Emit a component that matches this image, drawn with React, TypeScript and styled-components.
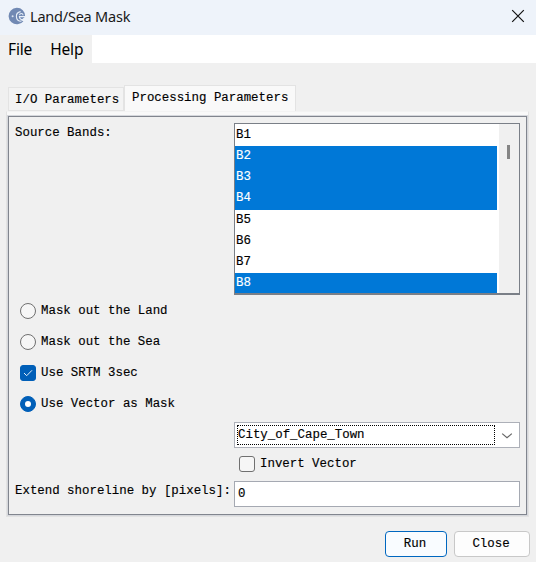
import React from "react";
import styled, { createGlobalStyle } from "styled-components";

const GlobalStyle = createGlobalStyle`
  * { box-sizing: border-box; }
  body { margin: 0; background: #f0f0f0; overflow: hidden; }
`;

const Window = styled.div`
  width: 536px;
  height: 562px;
  background: #f0f0f0;
  color: #000;
  font: 12.42px/20px "Liberation Mono", monospace;
  -webkit-text-stroke: 0.15px currentColor;
  white-space: pre;
  display: flex;
  flex-direction: column;
`;

const TitleBar = styled.header`
  height: 35px;
  flex: none;
  background: #eef3fa;
  display: flex;
  align-items: center;
  padding: 0 11px 4px 8px;
  -webkit-text-stroke: 0;
`;

const Title = styled.span`
  font: 14.5px/22px "Noto Sans", sans-serif;
  letter-spacing: -0.22px;
  color: #191919;
  margin: 1px auto 0 4px;
`;

const MenuBar = styled.nav`
  height: 28px;
  flex: none;
  background: #fff;
  display: flex;
  -webkit-text-stroke: 0;
`;

const Menus = styled.div`
  width: 92px;
  background: #f0f0f0;
  display: flex;
  gap: 18px;
  padding-left: 8px;
  font: 15.5px/28px "Noto Sans", sans-serif;
  letter-spacing: -0.15px;
`;

const TabStrip = styled.div`
  height: 48px;
  flex: none;
  display: flex;
  align-items: flex-end;
  padding-left: 8px;
`;

const Tab = styled.div<{ $active?: boolean }>`
  width: ${(p) => (p.$active ? 172 : 116)}px;
  height: ${(p) => (p.$active ? 26 : 24)}px;
  padding: ${(p) => (p.$active ? "2px 0 0 7px" : "2px 0 0 6px")};
  background: ${(p) => (p.$active ? "#f9f9f9" : "#f3f3f3")};
  border: 1px solid #e3e3e3;
  border-bottom: ${(p) => (p.$active ? "none" : "1px solid #e3e3e3")};
`;

const TabPane = styled.main`
  width: 523px;
  height: 406px;
  flex: none;
  margin-left: 6px;
  background: #f9f9f9;
  border: 1px solid #e2e2e2;
  border-top-color: #f3f3f3;
  padding: 4px 1px 1px 1px;
`;

const Form = styled.section`
  height: 100%;
  background: #f0f0f0;
  border: 1px solid #81858e;
  box-shadow: 0 0 0 1px #d5d7dc;
  padding: 6px 6px 0;
  display: flex;
  flex-direction: column;
`;

const FieldRow = styled.div<{ $h: number; $gap?: number }>`
  height: ${(p) => p.$h}px;
  margin-top: ${(p) => p.$gap ?? 0}px;
  flex: none;
  display: grid;
  grid-template-columns: 219px 286px;
`;

const FieldLabel = styled.label`
  line-height: 20px;
`;

const BandList = styled.div`
  height: 172px;
  border: 1px solid #7a7f87;
  border-bottom-width: 2px;
  background: #fff;
  display: flex;
  overflow: hidden;
`;

const Bands = styled.div`
  flex: 1;
  padding: 1px 2px 0 0;
`;

const Band = styled.div<{ $selected: boolean }>`
  height: 21.15px;
  line-height: 21px;
  padding-left: 1px;
  background: ${(p) => (p.$selected ? "#0078d7" : "#fff")};
  color: ${(p) => (p.$selected ? "#fff" : "#000")};
`;

const ScrollTrack = styled.div`
  width: 20px;
  background: #f0f0f0;
  padding: 21px 0 0 8px;
`;

const ScrollThumb = styled.div`
  width: 3px;
  height: 14px;
  background: #858585;
`;

const Choice = styled.label<{ $indent?: boolean; $h: number }>`
  height: ${(p) => p.$h}px;
  flex: none;
  display: flex;
  align-items: center;
  gap: 5px;
  padding-left: ${(p) => (p.$indent ? 224 : 5)}px;
`;

const Mark = styled.span<{ $round?: boolean; $on?: boolean }>`
  width: 16px;
  height: 16px;
  border-radius: ${(p) => (p.$round ? "50%" : "3px")};
  border: 1px solid ${(p) => (p.$on ? "#005fb8" : "#707070")};
  background: ${(p) => (p.$on ? "#005fb8" : "#f6f6f6")};
  display: flex;
  align-items: center;
  justify-content: center;
`;

const Dot = styled.span`
  width: 6px;
  height: 6px;
  border-radius: 50%;
  background: #fff;
`;

const Combo = styled.div`
  height: 26px;
  border: 1px solid #adb0b8;
  background: #fff;
  display: flex;
  align-items: center;
  padding: 0 6px 0 2px;
  justify-content: space-between;
`;

const ComboValue = styled.div`
  width: 258px;
  height: 20px;
  border: 1px dotted #000;
  line-height: 18px;
`;

const TextInput = styled.div`
  height: 26px;
  border: 1px solid #a5a9b2;
  background: #fff;
  padding-left: 3px;
  line-height: 25px;
`;

const Actions = styled.footer`
  flex: 1;
  display: flex;
  justify-content: flex-end;
  gap: 7px;
  padding: 14px 6px 0 0;
`;

const Button = styled.button<{ $primary?: boolean }>`
  width: ${(p) => (p.$primary ? 62 : 76)}px;
  height: 26px;
  border-radius: 4px;
  border: 1px solid ${(p) => (p.$primary ? "#0067c0" : "#c8c8c8")};
  background: ${(p) => (p.$primary ? "#f9fcff" : "#fdfdfd")};
  font: inherit;
  color: inherit;
  padding: 0 2px 0 0;
`;

const bands = [
  { name: "B1", selected: false },
  { name: "B2", selected: true },
  { name: "B3", selected: true },
  { name: "B4", selected: true },
  { name: "B5", selected: false },
  { name: "B6", selected: false },
  { name: "B7", selected: false },
  { name: "B8", selected: true },
];

const AgencyLogo = () => (
  <svg width="18" height="18" viewBox="0 0 18 18">
    <path
      d="M14.8 3.2A8.3 8.3 0 1 0 15.4 14.2L13 13.2 17 9.8A8.3 8.3 0 0 0 14.8 3.2Z"
      fill="#7189b3"
    />
    <circle cx="4.6" cy="9.2" r="1" fill="#dce5f2" />
    <path
      d="M17 9.6h-5.6c0 2.6 2.2 3.6 4.6 2.6M11.5 8.2c.5-2.2 3.3-2.2 3.6 0M12.6 4.6c-3 .5-4.3 2.4-4.2 4.8.1 2.8 2.2 4.8 5 4.8"
      fill="none"
      stroke="#e8eff8"
      strokeWidth="1.1"
    />
  </svg>
);

const CloseIcon = () => (
  <svg width="14" height="14" viewBox="0 0 14 14">
    <path d="M1.2 1.2l11.6 11.6M12.8 1.2L1.2 12.8" stroke="#111" strokeWidth="1.2" />
  </svg>
);

const Chevron = () => (
  <svg width="12" height="8" viewBox="0 0 12 8">
    <path d="M1.2 2.6l4.8 4.2 4.8-4.2" fill="none" stroke="#666" strokeWidth="1.2" />
  </svg>
);

const Check = () => (
  <svg width="10" height="8" viewBox="0 0 10 8">
    <path d="M1 4l2.7 2.7L9 1.3" fill="none" stroke="#e6f1fb" strokeWidth="1" />
  </svg>
);

export default function App() {
  return (
    <Window>
      <GlobalStyle />
      <TitleBar>
        <AgencyLogo />
        <Title>Land/Sea Mask</Title>
        <CloseIcon />
      </TitleBar>
      <MenuBar>
        <Menus>
          <span>File</span>
          <span>Help</span>
        </Menus>
      </MenuBar>
      <TabStrip>
        <Tab>I/O Parameters</Tab>
        <Tab $active>Processing Parameters</Tab>
      </TabStrip>
      <TabPane>
        <Form>
          <FieldRow $h={172}>
            <FieldLabel>Source Bands:</FieldLabel>
            <BandList>
              <Bands>
                {bands.map((b) => (
                  <Band key={b.name} $selected={b.selected}>
                    {b.name}
                  </Band>
                ))}
              </Bands>
              <ScrollTrack>
                <ScrollThumb />
              </ScrollTrack>
            </BandList>
          </FieldRow>
          <Choice $h={32}>
            <Mark $round />
            Mask out the Land
          </Choice>
          <Choice $h={30}>
            <Mark $round />
            Mask out the Sea
          </Choice>
          <Choice $h={32}>
            <Mark $on>
              <Check />
            </Mark>
            Use SRTM 3sec
          </Choice>
          <Choice $h={30}>
            <Mark $round $on>
              <Dot />
            </Mark>
            Use Vector as Mask
          </Choice>
          <FieldRow $h={26} $gap={3}>
            <span />
            <Combo>
              <ComboValue>City_of_Cape_Town</ComboValue>
              <Chevron />
            </Combo>
          </FieldRow>
          <Choice $h={32} $indent>
            <Mark />
            Invert Vector
          </Choice>
          <FieldRow $h={26} $gap={1}>
            <FieldLabel>Extend shoreline by [pixels]:</FieldLabel>
            <TextInput>0</TextInput>
          </FieldRow>
        </Form>
      </TabPane>
      <Actions>
        <Button $primary>Run</Button>
        <Button>Close</Button>
      </Actions>
    </Window>
  );
}
